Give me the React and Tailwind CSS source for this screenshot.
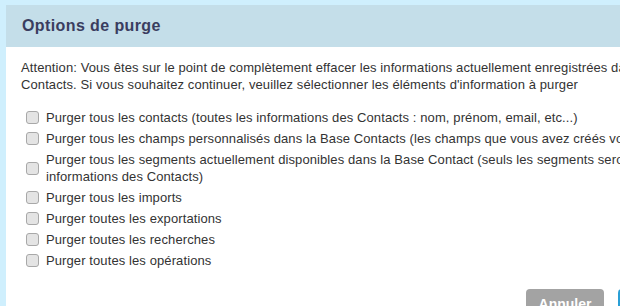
import React from 'react';

const options = [
    ['Purger tous les contacts (toutes les informations des Contacts : nom, prénom, email, etc...)'],
    ['Purger tous les champs personnalisés dans la Base Contacts (les champs que vous avez créés vous-même)'],
    ['Purger tous les segments actuellement disponibles dans la Base Contact (seuls les segments seront supprimés, pas les', 'informations des Contacts)'],
    ['Purger tous les imports'],
    ['Purger toutes les exportations'],
    ['Purger toutes les recherches'],
    ['Purger toutes les opérations'],
];

export default function App() {
    return (
        <div className="w-[620px] h-[306px] overflow-hidden bg-[#cfeffd] pl-[6px] pt-[5px] font-['Liberation_Sans',Arial,sans-serif]">
            <div className="w-[703px] bg-white">
                {/* Header */}
                <div className="h-[42px] bg-[#c4dee9] px-4 flex items-center">
                    <h2 className="text-[16px] font-bold tracking-[0.4px] text-[#3a3d5f]">Options de purge</h2>
                </div>

                {/* Body */}
                <div className="pt-[12px] px-[15px] text-[13px] leading-[17px] tracking-[0.1px] text-[#333]">
                    <p className="whitespace-nowrap">
                        Attention: Vous êtes sur le point de complètement effacer les informations actuellement enregistrées dans la Base<br />
                        Contacts. Si vous souhaitez continuer, veuillez sélectionner les éléments d'information à purger
                    </p>
                    <div className="mt-4 pl-[5px] flex flex-col gap-1">
                        {options.map((lines, idx) => (
                            <label key={idx} className="flex items-center gap-[7px] whitespace-nowrap">
                                <span className="w-[13px] h-[13px] rounded-[3px] border border-[#a8a8a8] bg-[#e4e4e4] shrink-0" />
                                <span>
                                    {lines.map((l, i) => (
                                        <span key={i} className="block">{l}</span>
                                    ))}
                                </span>
                            </label>
                        ))}
                    </div>
                </div>

                {/* Footer */}
                <div className="flex justify-end gap-[14px] px-4 pt-[20px] pb-4">
                    <button className="w-[78px] h-[30px] rounded-[4px] bg-[#a3a3a3] text-white font-bold text-[14px]">Annuler</button>
                    <button className="w-[75px] h-[30px] rounded-[4px] bg-[#2a9fd6] text-white font-bold text-[14px]">Purger</button>
                </div>
            </div>
        </div>
    );
}
